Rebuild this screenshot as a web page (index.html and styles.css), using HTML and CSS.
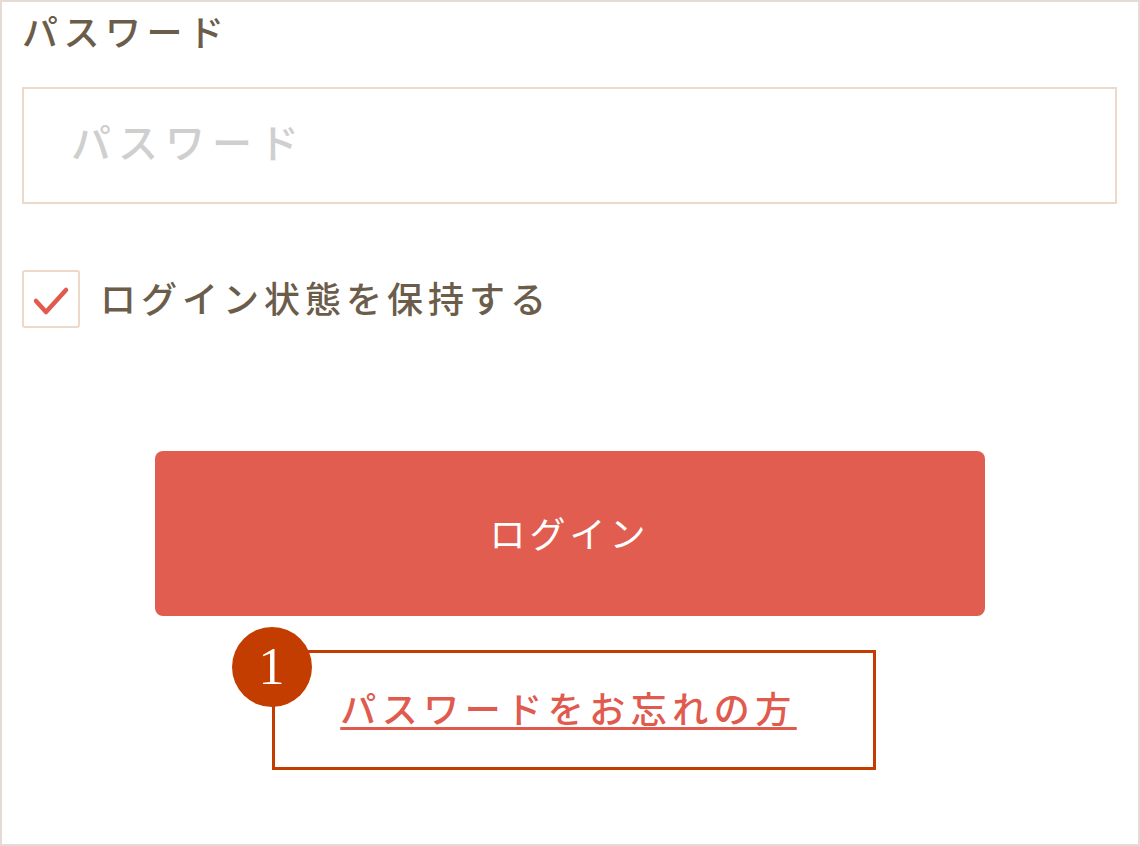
FILE: index.html
```html
<!DOCTYPE html>
<html lang="ja">
<head>
  <meta charset="UTF-8">
  <title>ログイン</title>
  <link rel="stylesheet" href="styles.css">
</head>
<body>

<div class="frame">
  <label class="field-label" for="password">パスワード</label>
  <div class="input-box">
    <input type="password" id="password" placeholder="パスワード">
  </div>

  <label class="remember">
    <span class="checkbox">
      <svg width="38" height="30" viewBox="0 0 38 30">
        <path d="M4 15 L14 26 L34 4" fill="none" stroke="#e05a4e" stroke-width="4.5" stroke-linecap="round" stroke-linejoin="round"/>
      </svg>
    </span>
    <span class="remember-text">ログイン状態を保持する</span>
  </label>

  <div class="actions">
    <button class="login-btn">ログイン</button>
    <div class="note">
      <span class="badge">1</span>
      <a class="forgot" href="#">パスワードをお忘れの方</a>
    </div>
  </div>
</div>

</body>
</html>
```

FILE: styles.css
```css
* {
  box-sizing: border-box;
}

body {
  margin: 0;
  font-family: "Noto Sans CJK JP", "Noto Sans", sans-serif;
  color: #6b5d4a;
  background: #fff;
}

.frame {
  width: 1140px;
  height: 846px;
  border: 2px solid #e4dbd7;
  padding: 6px 21px 0 20px;
}

.field-label {
  display: block;
  font-size: 36px;
  font-weight: 500;
  line-height: 44px;
  letter-spacing: 5.5px;
  color: #6b5d4a;
}

.input-box {
  margin-top: 35px;
  height: 117px;
  border: 2px solid #ecd9c9;
  display: flex;
  align-items: center;
  padding-left: 45px;
  padding-bottom: 10px;
}

.input-box input {
  border: none;
  outline: none;
  width: 100%;
  font-family: inherit;
  font-size: 40px;
  letter-spacing: 7px;
  background: transparent;
}

.input-box input::placeholder {
  color: #cfcfcf;
  font-weight: 500;
}

.remember {
  display: flex;
  align-items: center;
  gap: 20px;
  margin-top: 66px;
}

.checkbox {
  width: 58px;
  height: 58px;
  border: 2px solid #ecd9c9;
  border-radius: 3px;
  display: flex;
  align-items: center;
  justify-content: center;
  padding-top: 4px;
}

.remember-text {
  font-size: 36px;
  font-weight: 500;
  letter-spacing: 5px;
  color: #6b5d4a;
  margin-top: -5px;
}

.actions {
  display: flex;
  flex-direction: column;
  align-items: center;
  margin-top: 123px;
}

.login-btn {
  width: 830px;
  height: 165px;
  border: none;
  border-radius: 8px;
  background: #e05d4f;
  color: #fff;
  font-family: inherit;
  font-size: 36px;
  letter-spacing: 4px;
  cursor: pointer;
  padding-bottom: 4px;
}

.note {
  position: relative;
  margin-top: 34px;
  margin-left: 8px;
  width: 604px;
  height: 120px;
  border: 3px solid #c43d00;
  display: flex;
  justify-content: center;
  align-items: center;
  padding: 0 10px 6px 0;
}

.badge {
  position: absolute;
  left: -43px;
  top: -26px;
  width: 80px;
  height: 80px;
  border-radius: 50%;
  background: #c43d00;
  color: #fff;
  font-family: "Liberation Serif", serif;
  font-size: 52px;
  line-height: 80px;
  text-align: center;
}

.forgot {
  color: #e05a4e;
  font-size: 36px;
  font-weight: 500;
  letter-spacing: 5.5px;
  text-decoration: underline;
  text-decoration-thickness: 3px;
  text-underline-offset: 4px;
}
```
